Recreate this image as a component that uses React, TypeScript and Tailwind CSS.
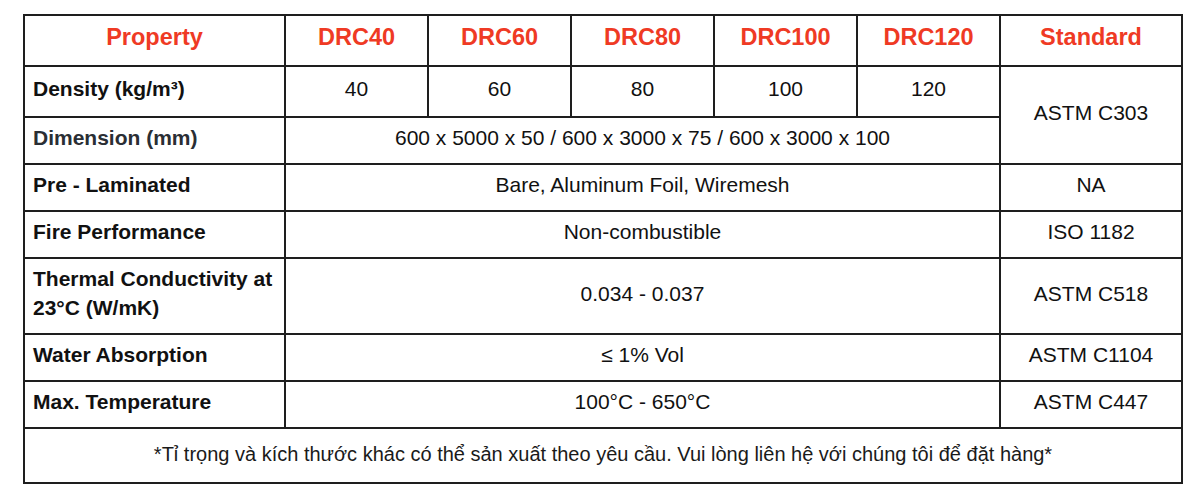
const cell = "border-2 border-[#1e1e1e] align-middle pb-[6px]";
const head = `${cell} text-center font-bold text-[23.5px] text-[#ef3a24]`;
const label = `${cell} text-left pl-[8px] pr-[6px] font-bold text-[21px] text-[#111]`;
const val = `${cell} text-center text-[21px] text-[#111]`;

const rows = [
  { label: "Pre - Laminated", value: "Bare, Aluminum Foil, Wiremesh", std: "NA", h: "h-[47px]" },
  { label: "Fire Performance", value: "Non-combustible", std: "ISO 1182", h: "h-[47px]" },
];

const rows2 = [
  { label: "Water Absorption", value: "≤ 1% Vol", std: "ASTM C1104" },
  { label: "Max. Temperature", value: "100°C - 650°C", std: "ASTM C447" },
];

export default function App() {
  return (
    <div className="bg-white w-[1200px] h-[500px] pt-[14px] pl-[23px] font-['Liberation_Sans',Arial,sans-serif] leading-[29px]">
      <table className="table-fixed border-collapse w-[1158px]">
        <colgroup>
          <col className="w-[261px]" />
          <col className="w-[143px]" />
          <col className="w-[143px]" />
          <col className="w-[143px]" />
          <col className="w-[143px]" />
          <col className="w-[143px]" />
          <col className="w-[182px]" />
        </colgroup>
        <tbody>
          <tr className="h-[51px]">
            <td className={head}>Property</td>
            <td className={head}>DRC40</td>
            <td className={head}>DRC60</td>
            <td className={head}>DRC80</td>
            <td className={head}>DRC100</td>
            <td className={head}>DRC120</td>
            <td className={head}>Standard</td>
          </tr>
          <tr className="h-[51px]">
            <td className={label}>Density (kg/m³)</td>
            <td className={val}>40</td>
            <td className={val}>60</td>
            <td className={val}>80</td>
            <td className={val}>100</td>
            <td className={val}>120</td>
            <td className={val} rowSpan={2}>ASTM C303</td>
          </tr>
          <tr className="h-[47px]">
            <td className={`${label} !text-[#2a2e34]`}>Dimension (mm)</td>
            <td className={val} colSpan={5}>600 x 5000 x 50 / 600 x 3000 x 75 / 600 x 3000 x 100</td>
          </tr>
          {rows.map((r) => (
            <tr key={r.label} className={r.h}>
              <td className={label}>{r.label}</td>
              <td className={val} colSpan={5}>{r.value}</td>
              <td className={val}>{r.std}</td>
            </tr>
          ))}
          <tr className="h-[76px]">
            <td className={label}>
              Thermal Conductivity at
              <br />
              23°C (W/mK)
            </td>
            <td className={val} colSpan={5}>0.034 - 0.037</td>
            <td className={val}>ASTM C518</td>
          </tr>
          {rows2.map((r) => (
            <tr key={r.label} className="h-[47px]">
              <td className={label}>{r.label}</td>
              <td className={val} colSpan={5}>{r.value}</td>
              <td className={val}>{r.std}</td>
            </tr>
          ))}
          <tr className="h-[55px]">
            <td className="border-2 border-[#1e1e1e] align-middle pb-[2px] text-center text-[20px] text-[#1a1a1a]" colSpan={7}>
              *Tỉ trọng và kích thước khác có thể sản xuất theo yêu cầu. Vui lòng liên hệ với chúng tôi để đặt hàng*
            </td>
          </tr>
        </tbody>
      </table>
    </div>
  );
}
